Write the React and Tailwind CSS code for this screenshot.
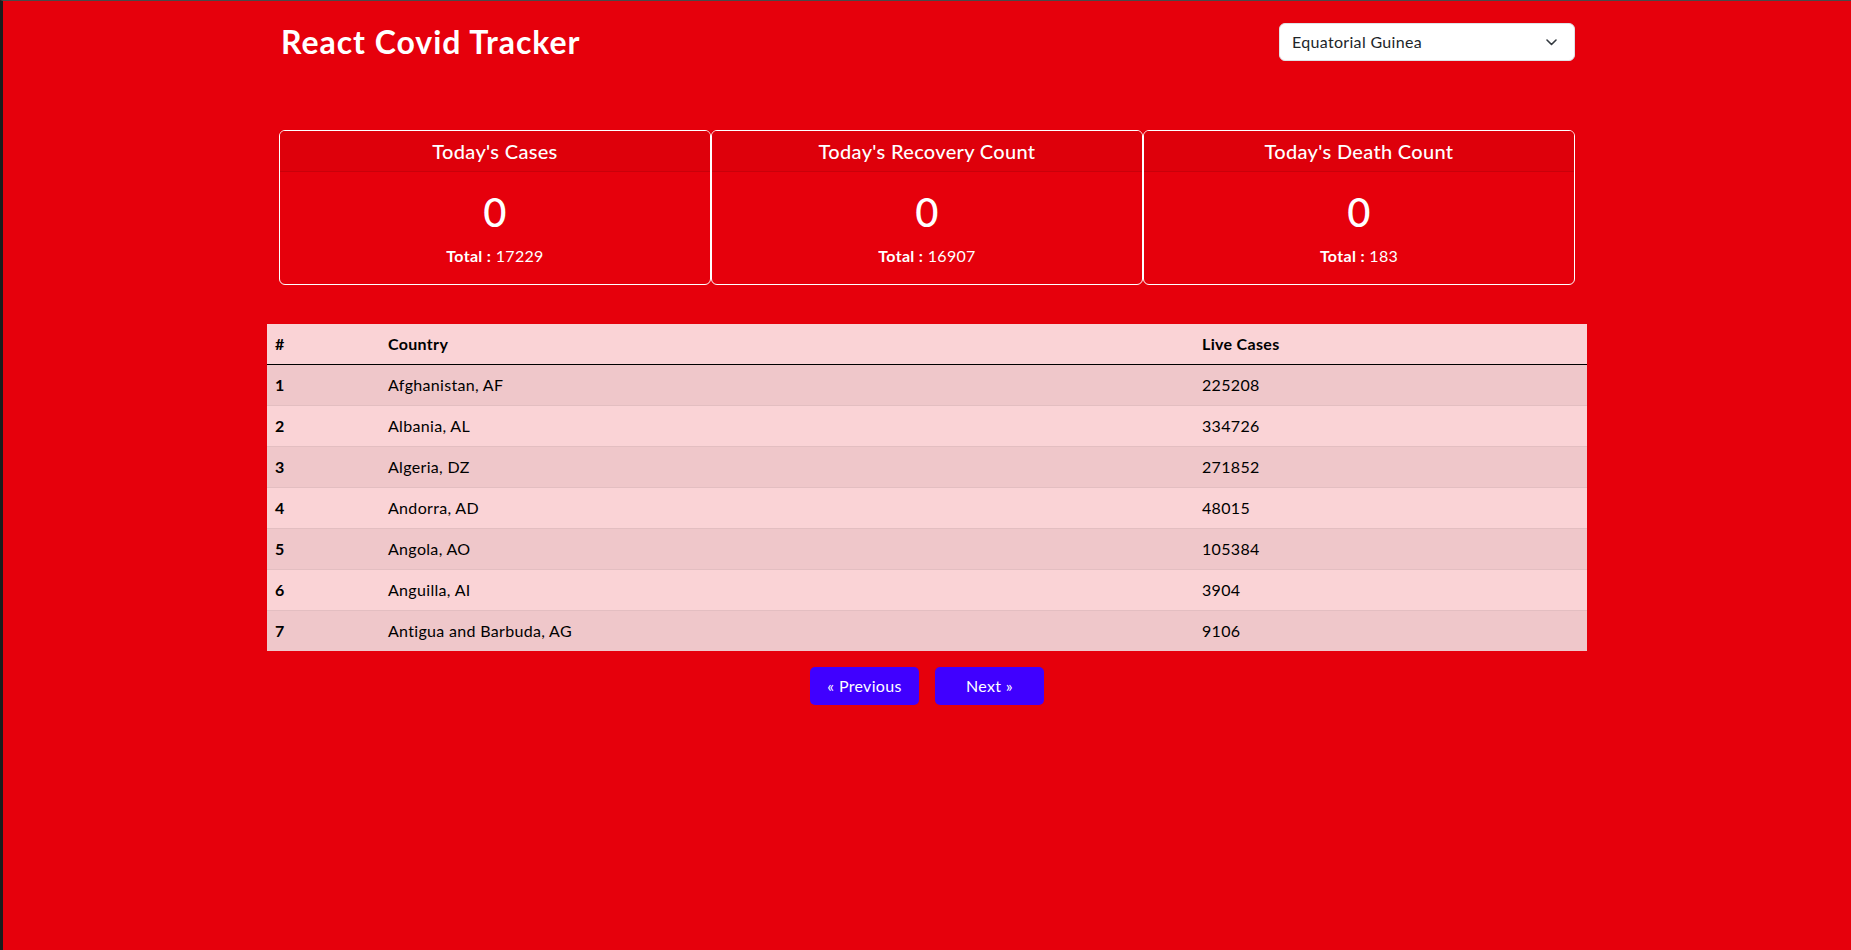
import React from "react";

const rows = [
  ["1", "Afghanistan, AF", "225208"],
  ["2", "Albania, AL", "334726"],
  ["3", "Algeria, DZ", "271852"],
  ["4", "Andorra, AD", "48015"],
  ["5", "Angola, AO", "105384"],
  ["6", "Anguilla, AI", "3904"],
  ["7", "Antigua and Barbuda, AG", "9106"],
];

const cards = [
  { title: "Today's Cases", today: "0", total: "17229" },
  { title: "Today's Recovery Count", today: "0", total: "16907" },
  { title: "Today's Death Count", today: "0", total: "183" },
];

export default function App() {
  return (
    <div
      className="min-h-screen bg-[#e6000c] border-t border-t-[#4a4a4a] border-l-[3px] border-l-[#1c1c1c] text-white tracking-[0.02em]"
      style={{ fontFamily: "Lato, 'Noto Sans', sans-serif" }}
    >
      <div className="mx-auto w-[1320px] px-3 pt-[22px]">
        <div className="flex items-start justify-between">
          <h2 className="text-[32px] font-bold leading-[1.2] pl-[2px] tracking-[0.03em]">React Covid Tracker</h2>
          <div className="w-[296px] h-[38px] bg-white rounded-[6px] border border-[#dee2e6] flex items-center justify-between pl-3 pr-[17px] text-[#212529] text-[16px]">
            <span>Equatorial Guinea</span>
            <svg width="11" height="7" viewBox="0 0 11 7" fill="none">
              <path d="M1 1l4.5 4.5L10 1" stroke="#343a40" strokeWidth="1.6" strokeLinecap="round" strokeLinejoin="round" />
            </svg>
          </div>
        </div>

        <div className="mt-[69px] grid grid-cols-3">
          {cards.map((c) => (
            <div key={c.title} className="border border-white rounded-[6px] overflow-hidden text-center">
              <div className="bg-[#de000b] border-b border-b-[#c9000a] py-2 px-4">
                <h5 className="text-[20px] leading-[24px] font-medium">{c.title}</h5>
              </div>
              <div className="p-4">
                <h1 className="text-[40px] leading-[48px] font-medium mb-2">{c.today}</h1>
                <p className="text-[16px] leading-[24px]">
                  <b>Total :</b> {c.total}
                </p>
              </div>
            </div>
          ))}
        </div>
      </div>

      <div className="mx-auto w-[1320px] mt-[39px]">
        <table className="w-full table-fixed border-collapse text-black text-[16px] leading-[24px]">
          <colgroup>
            <col className="w-[113px]" />
            <col className="w-[814px]" />
            <col />
          </colgroup>
          <thead>
            <tr className="bg-[#fad3d6] border-b border-b-black">
              <th className="text-left font-bold px-2 py-2">#</th>
              <th className="text-left font-bold px-2 py-2">Country</th>
              <th className="text-left font-bold px-2 py-2">Live Cases</th>
            </tr>
          </thead>
          <tbody>
            {rows.map((r, i) => (
              <tr
                key={r[0]}
                className={
                  (i % 2 === 0 ? "bg-[#efc7ca]" : "bg-[#fad3d6]") +
                  (i < rows.length - 1 ? " border-b border-b-[#e3bec1]" : "")
                }
              >
                <th className="text-left font-bold px-2 py-2">{r[0]}</th>
                <td className="px-2 py-2">{r[1]}</td>
                <td className="px-2 py-2">{r[2]}</td>
              </tr>
            ))}
          </tbody>
        </table>

        <div className="mt-4 flex justify-center gap-4">
          <button className="w-[109px] h-[38px] rounded-[5px] bg-[#4000ff] text-white text-[16px]">« Previous</button>
          <button className="w-[109px] h-[38px] rounded-[5px] bg-[#4000ff] text-white text-[16px]">Next »</button>
        </div>
      </div>
    </div>
  );
}
